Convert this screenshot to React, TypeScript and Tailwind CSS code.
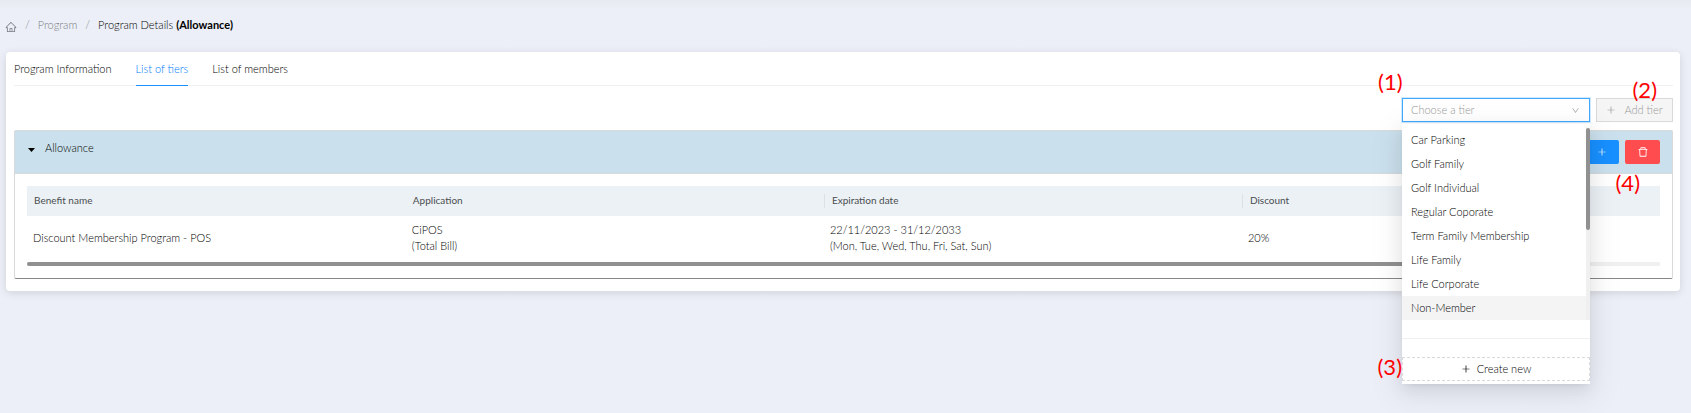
import {
  AiOutlineDelete,
  AiOutlineDown,
  AiOutlineHome,
  AiOutlinePlus,
} from "react-icons/ai";

const tiers = [
  "Car Parking",
  "Golf Family",
  "Golf Individual",
  "Regular Coporate",
  "Term Family Membership",
  "Life Family",
  "Life Corporate",
  "Non-Member",
];

const columns = ["Benefit name", "Application", "Expiration date", "Discount"];

function Note({ n, className }: { n: number; className: string }) {
  return (
    <span
      className={`pointer-events-none absolute z-20 font-['Lato',sans-serif] text-[22px] leading-6 font-normal whitespace-nowrap text-[#fe0000] ${className}`}
    >
      ({n})
    </span>
  );
}

function Breadcrumb() {
  return (
    <nav
      aria-label="Breadcrumb"
      className="flex h-[52px] items-center gap-2 px-[5px] pb-0.5 text-[#7c7f86]"
    >
      <a href="#home" aria-label="Home" className="pt-1">
        <AiOutlineHome className="size-3" />
      </a>
      <span>/</span>
      <a href="#program">Program</a>
      <span>/</span>
      <span className="text-black">
        Program Details <b className="font-bold">(Allowance)</b>
      </span>
    </nav>
  );
}

function Tabs() {
  return (
    <div role="tablist" className="flex h-[34px] gap-6 border-b border-[#f0f0f0]">
      <button role="tab" aria-selected="false">
        Program Information
      </button>
      <button
        role="tab"
        aria-selected="true"
        className="-mb-px border-b border-[#1890ff] text-[#007bff]"
      >
        List of tiers
      </button>
      <button role="tab" aria-selected="false">
        List of members
      </button>
    </div>
  );
}

function TierMenu() {
  return (
    <div className="absolute top-[26px] left-0 z-10 w-full bg-white pt-1 pb-[3px] shadow-[0_3px_6px_-4px_rgba(0,0,0,0.12),0_6px_16px_0_rgba(0,0,0,0.08),0_9px_28px_8px_rgba(0,0,0,0.05)]">
      <div className="flex">
        <ul role="listbox" aria-label="Tiers" className="flex-1">
          {tiers.map((tier) => (
            <li
              key={tier}
              role="option"
              aria-selected={tier === "Non-Member"}
              className="h-6 px-[9px] leading-6 aria-selected:bg-[#f4f4f4]"
            >
              {tier}
            </li>
          ))}
        </ul>
        <div className="w-1 bg-[#f0f0f0]">
          <div className="h-[102px] rounded-full bg-[#909090]" />
        </div>
      </div>
      <div className="mt-[18px] border-t border-[#f0f0f0] pt-[18px]">
        <div className="relative">
          <Note n={3} className="right-full bottom-0.5" />
          <button className="flex h-6 w-full items-center justify-center gap-1.5 border border-dashed border-[#d9d9d9]">
            <AiOutlinePlus className="size-2.5" />
            Create new
          </button>
        </div>
      </div>
    </div>
  );
}

function Toolbar() {
  return (
    <div className="flex justify-end gap-1.5 pt-3 pb-2">
      <div className="relative w-[188px]">
        <Note n={1} className="-left-6 bottom-7" />
        <select
          aria-label="Choose a tier"
          className="block h-6 w-full appearance-none border border-[#40a9ff] bg-white px-2 leading-5 text-[#999999] shadow-[0_0_0_1px_rgba(24,144,255,0.2)] outline-none"
        >
          <option>Choose a tier</option>
        </select>
        <AiOutlineDown className="pointer-events-none absolute top-2 right-2.5 size-[9px] text-[#a8a8a8]" />
        <TierMenu />
      </div>
      <div className="relative w-[77px]">
        <Note n={2} className="right-4 bottom-5" />
        <button
          disabled
          className="flex h-6 w-full items-center justify-center gap-2 border border-[#d9d9d9] bg-[#f5f5f5] text-[#999999]"
        >
          <AiOutlinePlus className="size-2.5" />
          Add tier
        </button>
      </div>
    </div>
  );
}

function BenefitTable() {
  return (
    <table className="w-full table-fixed text-left">
      <colgroup>
        <col className="w-[23.2%]" />
        <col className="w-[25.6%]" />
        <col className="w-[25.6%]" />
        <col className="w-[25.6%]" />
      </colgroup>
      <thead>
        <tr className="h-[30px] bg-[#ecf1f5] text-[10px] text-[#4a4d50]">
          {columns.map((name, i) => (
            <th key={name} className="p-0 font-normal">
              <div
                className={
                  i > 1
                    ? "h-3.5 border-l border-[#dde1e5] pl-[7px] leading-3"
                    : "h-3.5 pl-[7px] leading-3"
                }
              >
                {name}
              </div>
            </th>
          ))}
        </tr>
      </thead>
      <tbody>
        <tr className="h-[46px]">
          <td className="px-1.5 pb-0.5">Discount Membership Program - POS</td>
          <td className="px-1.5 pb-0.5">
            CiPOS
            <br />
            (Total Bill)
          </td>
          <td className="px-1.5 pb-0.5">
            22/11/2023 - 31/12/2033
            <br />
            (Mon, Tue, Wed, Thu, Fri, Sat, Sun)
          </td>
          <td className="px-1.5 pb-0.5">20%</td>
        </tr>
      </tbody>
    </table>
  );
}

function TierPanel() {
  return (
    <section className="rounded-xs border border-[#d9d9d9] border-b-[#888888]">
      <div className="flex h-[43px] justify-between border-b border-[#d9d9d9] bg-[#cae0ec] pr-3">
        <button
          aria-expanded="true"
          className="flex h-[34px] items-center gap-2.5 pl-[13px]"
        >
          <svg viewBox="0 0 7 4" className="mt-1 h-1 w-[7px]" fill="currentColor">
            <path d="M0 0H7L3.5 4Z" />
          </svg>
          Allowance
        </button>
        <div className="relative flex items-center gap-1.5">
          <Note n={4} className="top-10 right-5" />
          <button
            aria-label="Add benefit"
            className="flex h-6 w-[35px] items-center justify-center rounded-xs bg-[#1890ff] text-white"
          >
            <AiOutlinePlus className="size-2.5" />
          </button>
          <button
            aria-label="Delete tier"
            className="flex h-6 w-[35px] items-center justify-center rounded-xs bg-[#ff4d4f] text-white"
          >
            <AiOutlineDelete className="size-3" />
          </button>
        </div>
      </div>
      <div className="p-3">
        <BenefitTable />
        <div className="h-1 bg-[#f0f0f0]">
          <div className="h-1 w-[86%] rounded-full bg-[#909090]" />
        </div>
      </div>
    </section>
  );
}

export default function App() {
  return (
    <div className="min-h-screen bg-linear-to-b from-[#e7eaf1] to-[#eceff7] to-[10px] pr-[11px] pl-1.5 font-['Lato',sans-serif] text-[11px] leading-4 font-light text-black">
      <div className="-ml-1.5">
        <Breadcrumb />
      </div>
      <main className="rounded-sm bg-white pr-[7px] pb-3 pl-2 shadow-[0_2px_8px_rgba(0,0,0,0.12)]">
        <Tabs />
        <Toolbar />
        <TierPanel />
      </main>
    </div>
  );
}
